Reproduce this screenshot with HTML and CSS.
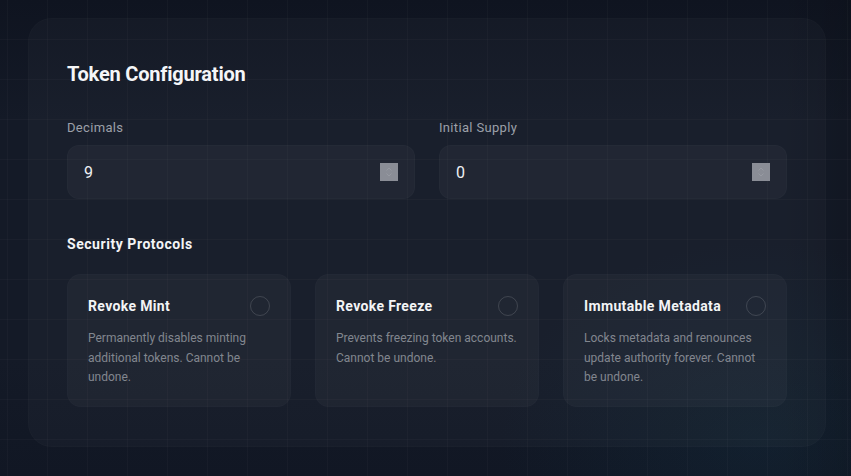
FILE: index.html
```html
<!DOCTYPE html>
<html lang="en">
<head>
<meta charset="utf-8">
<title>Token Configuration</title>
<link rel="stylesheet" href="styles.css">
</head>
<body>
<div class="page">
  <section class="panel">
    <h2 class="panel-title">Token Configuration</h2>
    <div class="fields">
      <div class="field">
        <label class="field-label">Decimals</label>
        <div class="input">
          <span class="input-value">9</span>
          <span class="spinner"><svg width="18" height="18" viewBox="0 0 18 18"><path d="M6.5 7.5 L9 5 L11.5 7.5 M6.5 10.5 L9 13 L11.5 10.5" fill="none" stroke="#979aa2" stroke-width="1"/></svg></span>
        </div>
      </div>
      <div class="field">
        <label class="field-label">Initial Supply</label>
        <div class="input">
          <span class="input-value">0</span>
          <span class="spinner"><svg width="18" height="18" viewBox="0 0 18 18"><path d="M6.5 7.5 L9 5 L11.5 7.5 M6.5 10.5 L9 13 L11.5 10.5" fill="none" stroke="#979aa2" stroke-width="1"/></svg></span>
        </div>
      </div>
    </div>
    <h3 class="section-title">Security Protocols</h3>
    <div class="protocols">
      <div class="protocol">
        <div class="protocol-head">
          <span class="protocol-name">Revoke Mint</span>
          <span class="toggle"></span>
        </div>
        <p class="protocol-desc">Permanently disables minting additional tokens. Cannot be undone.</p>
      </div>
      <div class="protocol">
        <div class="protocol-head">
          <span class="protocol-name">Revoke Freeze</span>
          <span class="toggle"></span>
        </div>
        <p class="protocol-desc">Prevents freezing token accounts. Cannot be undone.</p>
      </div>
      <div class="protocol">
        <div class="protocol-head">
          <span class="protocol-name">Immutable Metadata</span>
          <span class="toggle"></span>
        </div>
        <p class="protocol-desc">Locks metadata and renounces update authority forever. Cannot be undone.</p>
      </div>
    </div>
  </section>
</div>
</body>
</html>
```

FILE: styles.css
```css
html, body {
  margin: 0;
  padding: 0;
}
body {
  width: 851px;
  height: 476px;
  overflow: hidden;
  font-family: Roboto, "Liberation Sans", sans-serif;
  color: #f3f4f6;
  background-color: #121826;
  background-image:
    linear-gradient(rgba(255,255,255,0.025) 1px, transparent 1px),
    linear-gradient(90deg, rgba(255,255,255,0.025) 1px, transparent 1px),
    radial-gradient(ellipse 260px 200px at 760px 440px, rgba(20,60,80,0.22), transparent),
    linear-gradient(90deg, rgba(0,0,0,0) 780px, rgba(0,0,0,0.12) 851px),
    linear-gradient(180deg, #0f1420 0px, #141a27 120px, #141a27 360px, #111724 476px);
  background-size: 40px 40px, 40px 40px, auto, auto, auto;
  background-position: 0 39px, 7px 0, 0 0, 0 0, 0 0;
}
.page {
  padding: 18px 25px 29px 28px;
}
.panel {
  box-sizing: border-box;
  width: 798px;
  height: 429px;
  padding: 42px 38px 40px 38px;
  border-radius: 24px;
  background: rgba(255,255,255,0.022);
  border: 1px solid rgba(255,255,255,0.015);
}
.panel-title {
  margin: 0;
  font-size: 20px;
  line-height: 28px;
  font-weight: 700;
  letter-spacing: -0.2px;
  color: #f5f6f8;
  position: relative;
  top: -1px;
}
.fields {
  display: flex;
  gap: 24px;
  margin-top: 29px;
}
.field {
  flex: 1;
  display: flex;
  flex-direction: column;
}
.field-label {
  font-size: 13px;
  line-height: 20px;
  letter-spacing: 0.33px;
  color: #9ca0a9;
  margin-bottom: 7px;
}
.input {
  box-sizing: border-box;
  height: 54px;
  display: flex;
  align-items: center;
  justify-content: space-between;
  padding: 0 16px;
  border-radius: 12px;
  background: rgba(255,255,255,0.035);
  border: 1px solid rgba(255,255,255,0.02);
}
.input-value {
  font-size: 16px;
  color: #eef0f3;
}
.spinner {
  width: 18px;
  height: 18px;
  background: #8a8d96;
  display: block;
}
.spinner svg {
  display: block;
}
.section-title {
  margin: 35px 0 0 0;
  font-size: 14px;
  line-height: 20px;
  font-weight: 700;
  letter-spacing: 0.55px;
  color: #f3f4f6;
}
.protocols {
  display: grid;
  grid-template-columns: repeat(3, 1fr);
  gap: 24px;
  margin-top: 20px;
}
.protocol {
  box-sizing: border-box;
  height: 133px;
  padding: 21px 20px 20px 20px;
  border-radius: 14px;
  background: rgba(255,255,255,0.03);
  border: 1px solid rgba(255,255,255,0.015);
}
.protocol-head {
  display: flex;
  align-items: center;
  justify-content: space-between;
  height: 20px;
}
.protocol-name {
  font-size: 14px;
  line-height: 20px;
  font-weight: 700;
  letter-spacing: 0.35px;
  color: #f3f4f6;
}
.toggle {
  box-sizing: border-box;
  width: 20px;
  height: 20px;
  border-radius: 50%;
  border: 1px solid rgba(255,255,255,0.14);
}
.protocol-desc {
  margin: 13px 0 0 0;
  font-size: 12px;
  line-height: 19.5px;
  color: #82868f;
}
```
